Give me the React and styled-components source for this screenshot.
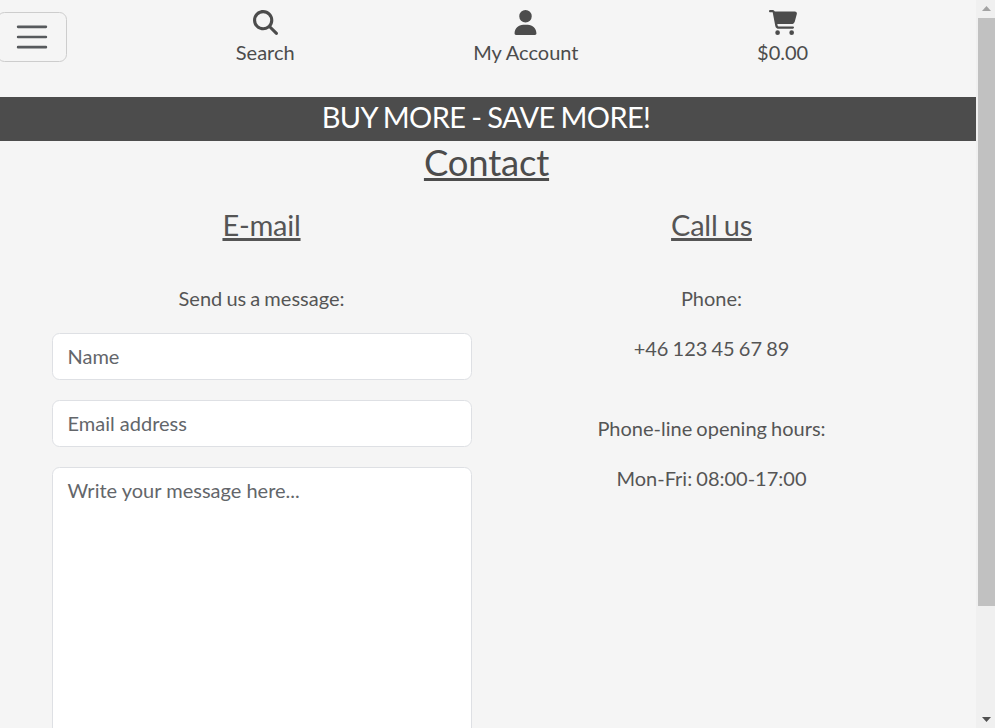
import React from "react";
import styled, { createGlobalStyle } from "styled-components";
import { FaMagnifyingGlass, FaUser } from "react-icons/fa6";

const GlobalStyle = createGlobalStyle`
  *, *::before, *::after { box-sizing: border-box; }
  body {
    margin: 0;
    overflow: hidden;
    background: #f5f5f5;
    color: #4c4c4c;
    font: 400 20px/30px Lato, sans-serif;
  }
`;

const Window = styled.div`
  display: grid;
  grid-template-columns: 976px 19px;
  height: 728px;
`;

const Page = styled.div`
  height: 728px;
  overflow: hidden;
`;

const Header = styled.header`
  display: flex;
  height: 97px;
`;

const MenuButton = styled.button`
  display: flex;
  align-items: center;
  justify-content: flex-end;
  width: 70px;
  height: 50px;
  margin: 12px 0 0 -3px;
  padding: 0 15px;
  flex: none;
  border: 1px solid #cdcdcd;
  border-radius: 7.5px;
  background: transparent;
`;

const Actions = styled.nav`
  display: flex;
  justify-content: space-around;
  width: 751px;
  margin-left: 79.5px;
  padding-top: 10px;
`;

const Action = styled.a`
  display: flex;
  flex-direction: column;
  align-items: center;
  color: #4c4c4c;
  line-height: 30px;

  svg {
    display: block;
    height: 25px;
    width: auto;
    margin-bottom: 2px;
  }
`;

const Banner = styled.div`
  height: 44px;
  padding-right: 4px;
  background: #4c4c4c;
  color: #fff;
  font-size: 29px;
  line-height: 40px;
  letter-spacing: -0.6px;
  word-spacing: -1px;
  text-align: center;
`;

const Title = styled.h1`
  margin: 0;
  height: 60px;
  padding-right: 3px;
  font-size: 36.5px;
  font-weight: 400;
  line-height: 42px;
  letter-spacing: -0.2px;
  text-align: center;
  text-decoration: underline;
  text-decoration-thickness: 3px;
`;

const Columns = styled.main`
  display: grid;
  grid-template-columns: 450px 450px;
  padding-left: 37px;
  word-spacing: -1px;
`;

const Column = styled.section`
  padding: 0 16px 0 15px;
  color: #555;
  text-align: center;
`;

const Heading = styled.h2`
  margin: 6px 0 40px;
  font-size: 29px;
  font-weight: 400;
  line-height: 36px;
  letter-spacing: -0.25px;
  text-decoration: underline;
  text-decoration-thickness: 3px;
`;

const Text = styled.p`
  margin: 0 0 ${({ $gap }) => $gap || 20}px;
`;

const Form = styled.form`
  display: flex;
  flex-direction: column;
  gap: 20px;
  width: 420px;
`;

const Field = styled.input`
  display: block;
  width: 100%;
  height: ${({ $height }) => $height || 47}px;
  padding: 6.5px 15px 8.5px 14.5px;
  resize: none;
  border: 1px solid #dee0e4;
  border-radius: 7.5px;
  background: #fff;
  font: 400 20px/30px Lato, sans-serif;

  &::placeholder {
    color: #63666a;
    opacity: 1;
  }
`;

const Scrollbar = styled.div`
  display: flex;
  flex-direction: column;
  justify-content: space-between;
  padding-left: 2px;
  background: #f0f0f0;
`;

const Thumb = styled.div`
  height: 588px;
  margin-bottom: auto;
  background: #c1c1c1;
`;

const Arrow = styled.svg`
  display: block;
  width: 17px;
  height: 18px;
`;

function CartIcon() {
  return (
    <svg viewBox="0 0 576 512" fill="currentColor">
      <path d="M0 24C0 10.7 10.7 0 24 0H69.500c22 0 41.500 12.800 50.600 32h411c26.300 0 45.500 25 38.600 50.400l-41 152.300c-8.500 31.400-37 53.300-69.500 53.300H170.700l5.400 28.500c2.200 11.300 12.100 19.500 23.600 19.500H488c13.300 0 24 10.700 24 24s-10.700 24-24 24H199.700c-34.600 0-64.300-24.600-70.700-58.500L77.400 54.500c-.7-3.800-4-6.500-7.900-6.500H24C10.700 48 0 37.300 0 24zM128 464a48 48 0 1 1 96 0 48 48 0 1 1-96 0zm336-48a48 48 0 1 1 0 96 48 48 0 1 1 0-96z" />
    </svg>
  );
}

export default function App() {
  return (
    <>
      <GlobalStyle />
      <Window>
        <Page>
          <Header>
            <MenuButton aria-label="Menu">
              <svg width="38" height="38" viewBox="0 0 30 30" fill="none" stroke="rgba(33,37,41,.75)" strokeLinecap="round" strokeMiterlimit="10" strokeWidth="2">
                <path d="M4 7h22M4 15h22M4 23h22" />
              </svg>
            </MenuButton>
            <Actions>
              <Action><FaMagnifyingGlass />Search</Action>
              <Action><FaUser />My Account</Action>
              <Action><CartIcon />$0.00</Action>
            </Actions>
          </Header>
          <Banner>BUY MORE - SAVE MORE!</Banner>
          <Title>Contact</Title>
          <Columns>
            <Column>
              <Heading>E-mail</Heading>
              <Text>Send us a message:</Text>
              <Form>
                <Field placeholder="Name" />
                <Field placeholder="Email address" />
                <Field as="textarea" $height={320} placeholder="Write your message here..." />
              </Form>
            </Column>
            <Column>
              <Heading>Call us</Heading>
              <Text>Phone:</Text>
              <Text $gap={50}>+46 123 45 67 89</Text>
              <Text>Phone-line opening hours:</Text>
              <Text>Mon-Fri: 08:00-17:00</Text>
            </Column>
          </Columns>
        </Page>
        <Scrollbar>
          <Arrow viewBox="0 0 17 18"><path d="M4 11h9L8.5 6z" fill="#a3a3a3" /></Arrow>
          <Thumb />
          <Arrow viewBox="0 0 17 18"><path d="M4 7h9L8.500 12z" fill="#505050" /></Arrow>
        </Scrollbar>
      </Window>
    </>
  );
}
